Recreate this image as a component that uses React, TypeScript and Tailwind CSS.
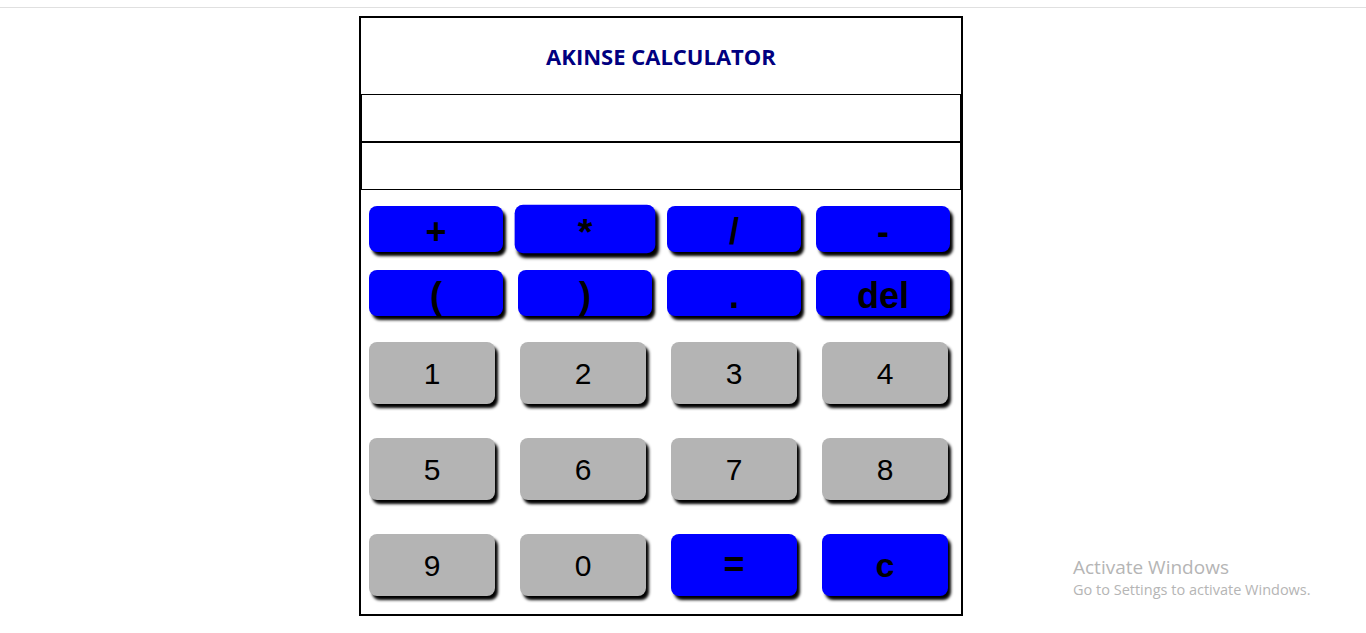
import React from 'react';

const ops1 = ['+', '*', '/', '-'];
const ops2 = ['(', ')', '.', 'del'];
const nums = [
  ['1', '2', '3', '4'],
  ['5', '6', '7', '8'],
];

function App() {
  return (
    <div className="relative min-h-screen bg-white pt-[7px] font-['Liberation_Sans',Arial,sans-serif]">
      <div className="h-px bg-[#e0e0e0]" />

      <div className="ml-[359px] mt-[8px] w-[604px] border-2 border-black">
        <div className="h-[76px] flex items-center justify-center">
          <h1 className="text-[22px] font-bold text-[#000080] font-['Open_Sans',sans-serif]">
            AKINSE CALCULATOR
          </h1>
        </div>

        <input type="text" className="block w-full h-[48px] border border-black outline-none" />
        <input type="text" className="block w-full h-[48px] border border-black outline-none" />

        <div className="pt-[16px] pb-[18px] pl-[8px]">
          <div className="flex gap-[15px]">
            {ops1.map((op) => (
              <button
                key={op}
                className={
                  'w-[134px] h-[46px] rounded-lg bg-[#0000ff] text-black font-bold text-[36px] leading-[41px] pt-[5px] shadow-[3px_4px_3px_#000]' +
                  (op === '*' ? ' scale-[1.05]' : '')
                }
              >
                {op}
              </button>
            ))}
          </div>

          <div className="flex gap-[15px] mt-[18px]">
            {ops2.map((op) => (
              <button
                key={op}
                className="w-[134px] h-[46px] rounded-lg bg-[#0000ff] text-black font-bold text-[36px] leading-[41px] pt-[5px] shadow-[3px_4px_3px_#000]"
              >
                {op}
              </button>
            ))}
          </div>

          {nums.map((row, i) => (
            <div key={i} className={'flex gap-[25px] ' + (i === 0 ? 'mt-[26px]' : 'mt-[34px]')}>
              {row.map((n) => (
                <button
                  key={n}
                  className="w-[126px] h-[62px] rounded-lg bg-[#b4b4b4] text-black text-[30px] leading-[60px] pt-[2px] shadow-[3px_4px_3px_#000]"
                >
                  {n}
                </button>
              ))}
            </div>
          ))}

          <div className="flex gap-[25px] mt-[34px]">
            <button className="w-[126px] h-[62px] rounded-lg bg-[#b4b4b4] text-black text-[30px] leading-[60px] pt-[2px] shadow-[3px_4px_3px_#000]">
              9
            </button>
            <button className="w-[126px] h-[62px] rounded-lg bg-[#b4b4b4] text-black text-[30px] leading-[60px] pt-[2px] shadow-[3px_4px_3px_#000]">
              0
            </button>
            <button className="w-[126px] h-[62px] rounded-lg bg-[#0000ff] text-black font-bold text-[36px] leading-[62px] shadow-[3px_4px_3px_#000]">
              =
            </button>
            <button className="w-[126px] h-[62px] rounded-lg bg-[#0000ff] text-black font-bold text-[34px] leading-[62px] shadow-[3px_4px_3px_#000]">
              c
            </button>
          </div>
        </div>
      </div>

      {/* windows watermark */}
      <div className="absolute left-[1073px] top-[554px] text-[#b5b5b5] font-['Open_Sans',sans-serif]">
        <div className="text-[19px] leading-[26px]">Activate Windows</div>
        <div className="text-[14.5px] leading-[20px]">Go to Settings to activate Windows.</div>
      </div>
    </div>
  );
}

export default App;
